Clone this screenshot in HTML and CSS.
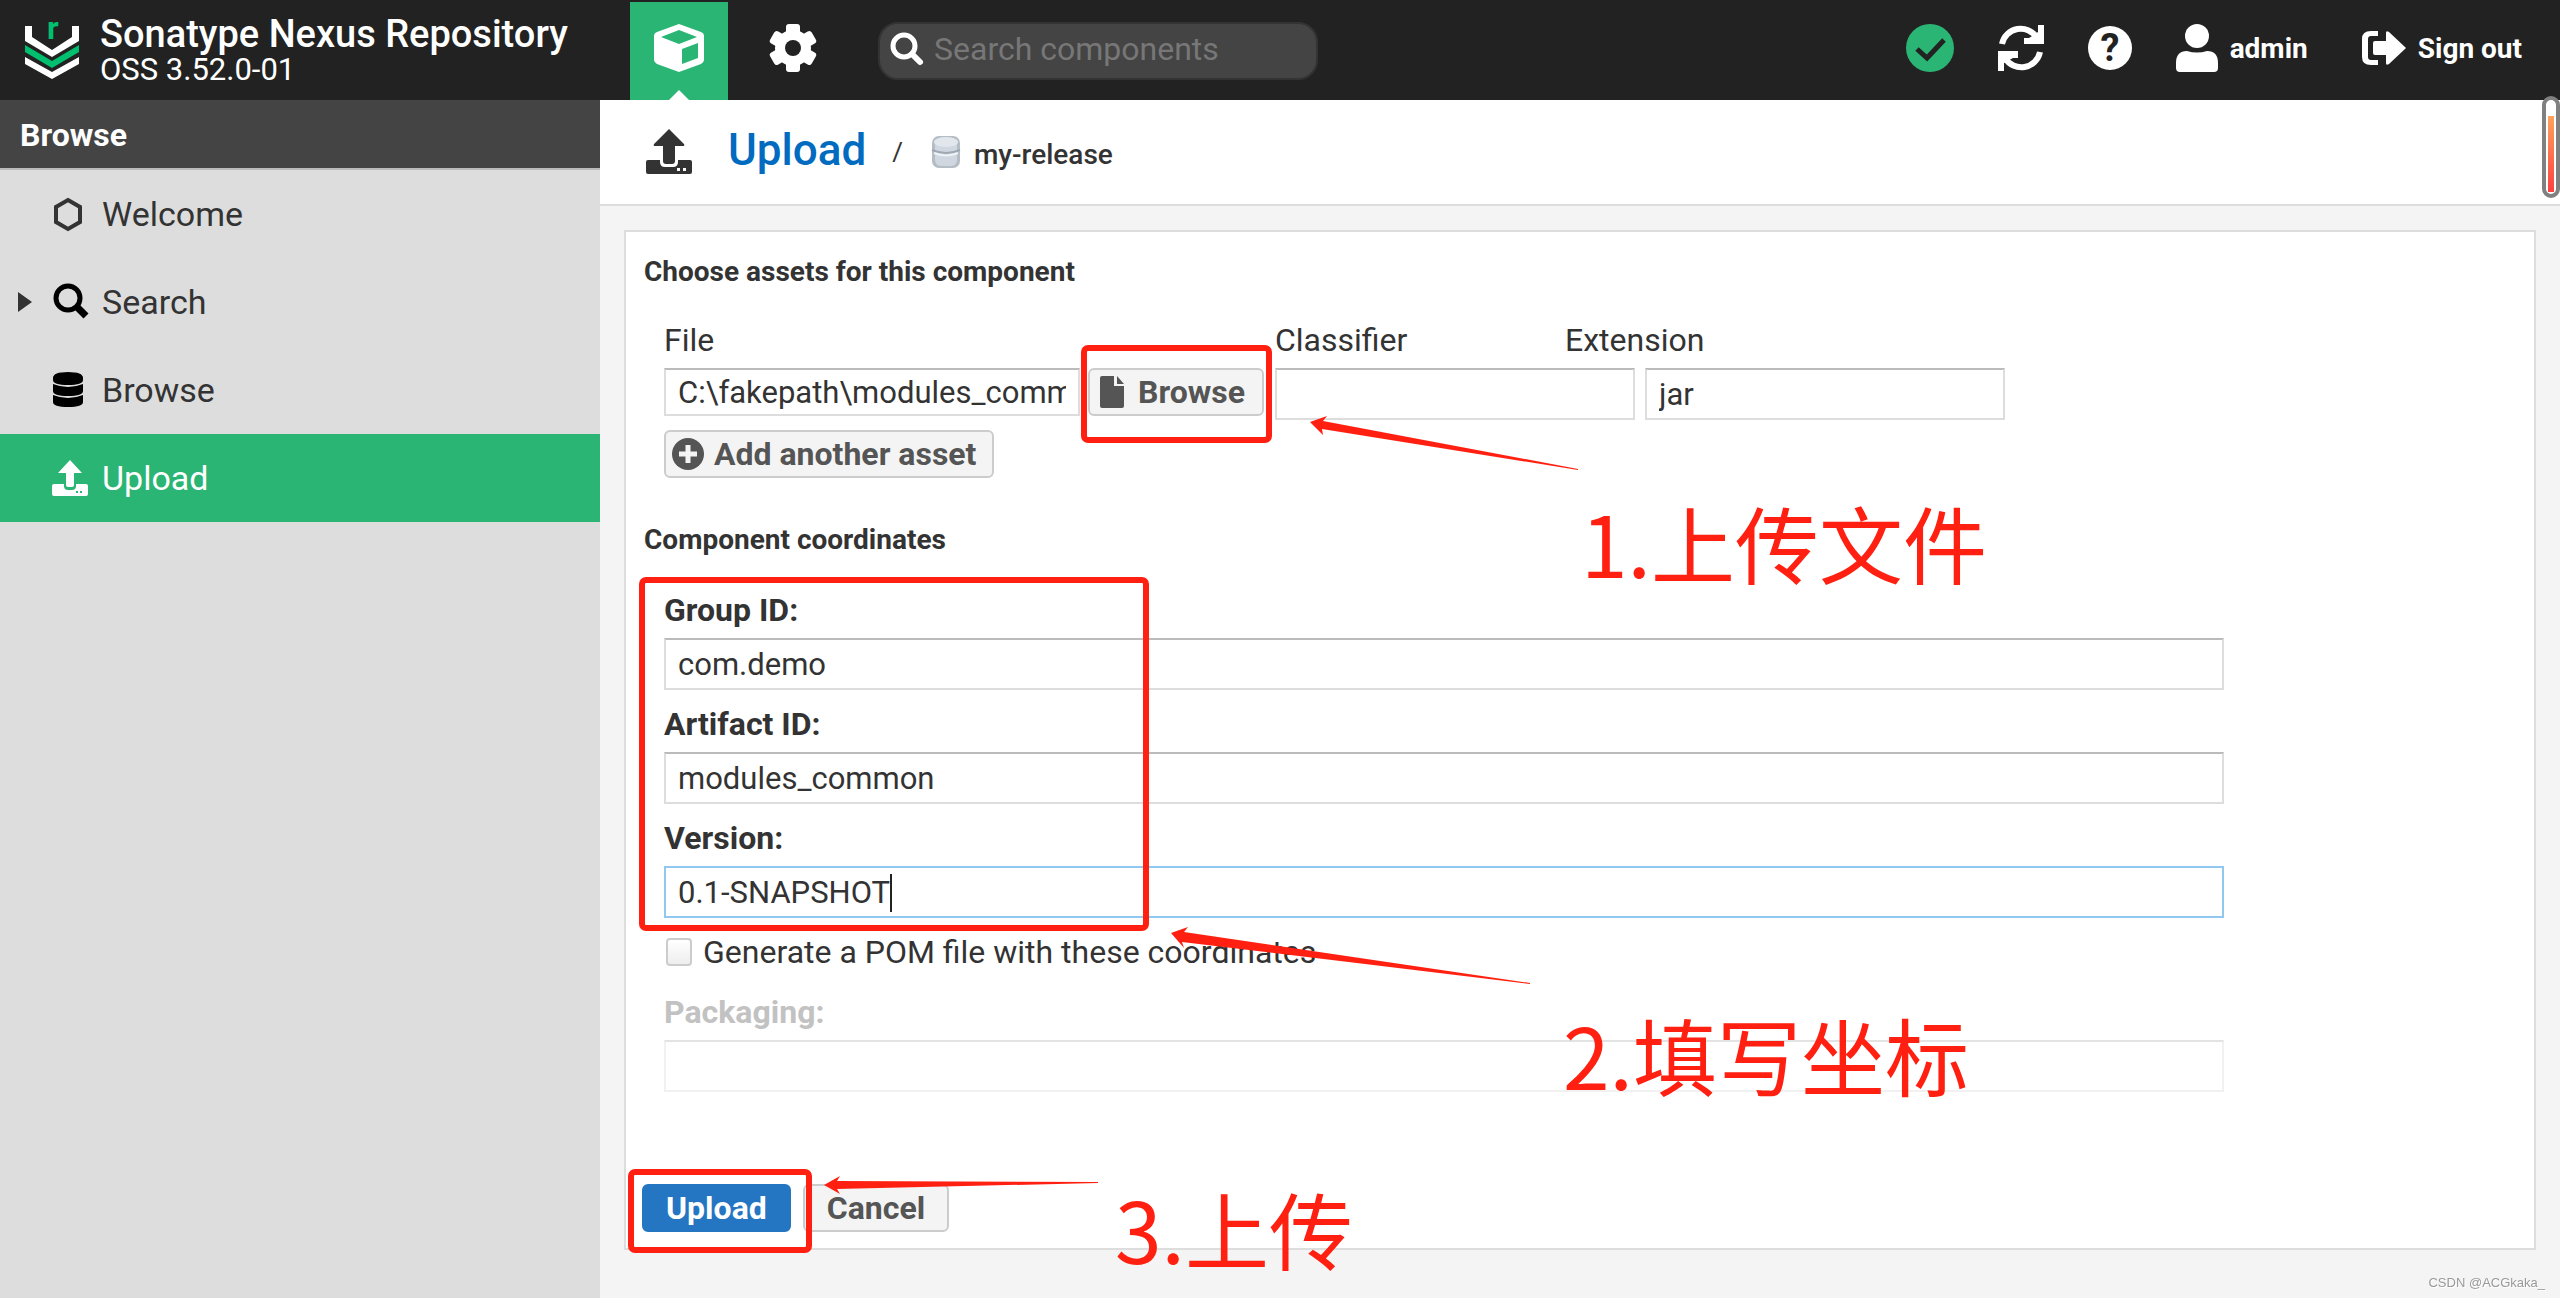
FILE: index.html
```
<!DOCTYPE html>
<html lang="en">
<head>
  <meta charset="UTF-8">
  <meta name="viewport" content="width=device-width, initial-scale=1.0">
  <title>Upload - Sonatype Nexus Repository</title>
  <link rel="stylesheet" href="styles.css">
</head>
<body>
  <header class="header">
    <div class="brand">
      <svg class="logo" viewBox="0 0 54 58">
        <path d="M0 5h7v11l20 13 20-13V5h7v15L27 36 0 20z" fill="#fff"/>
        <path d="M0 24l27 16 27-16v7L27 47 0 31z" fill="#00bf6f"/>
        <path d="M0 36l27 15 27-15v7L27 58 0 43z" fill="#fff"/>
        <text x="22" y="18" class="logo-r">r</text>
      </svg>
      <div>
        <div class="brand-name">Sonatype Nexus Repository</div>
        <div class="brand-version">OSS 3.52.0-01</div>
      </div>
    </div>
    <button class="mode-btn active" aria-label="Browse server contents">
      <svg width="50" height="48" viewBox="0 0 50 48">
        <path d="M25 0l22 8q3 1 3 4v24q0 2-3 4L25 48 3 40q-3-2-3-4V12q0-3 3-4z" fill="#fff"/>
        <path d="M25 6l18 7-18 7-18-7zM28 25l16-6v15l-16 6z" fill="#2ab574"/>
      </svg>
    </button>
    <button class="mode-btn" aria-label="Administration">
      <svg width="48" height="48" viewBox="0 0 48 48" fill="#fff">
        <mask id="gear"><rect width="48" height="48" fill="#fff"/><circle cx="24" cy="24" r="8" fill="#000"/></mask>
        <g mask="url(#gear)">
          <circle cx="24" cy="24" r="18"/>
          <rect x="17" y="0" width="14" height="48" rx="3"/>
          <rect x="17" y="0" width="14" height="48" rx="3" transform="rotate(60 24 24)"/>
          <rect x="17" y="0" width="14" height="48" rx="3" transform="rotate(120 24 24)"/>
        </g>
      </svg>
    </button>
    <div class="search">
      <svg width="34" height="34" viewBox="0 0 34 34" fill="none" stroke="#fff">
        <circle cx="14" cy="14" r="11" stroke-width="5"/>
        <path d="M22 22l8 8" stroke-width="6" stroke-linecap="round"/>
      </svg>
      <input type="text" placeholder="Search components" aria-label="Search components">
    </div>
    <div class="header-right">
      <button class="icon-btn" aria-label="System status">
        <svg width="48" height="48" viewBox="0 0 48 48">
          <circle cx="24" cy="24" r="24" fill="#2ab574"/>
          <path d="M11 25l10 9 17-18" fill="none" stroke="#222" stroke-width="5"/>
        </svg>
      </button>
      <button class="icon-btn" aria-label="Refresh">
        <svg width="46" height="46" viewBox="0 0 46 46" fill="none" stroke="#fff" stroke-width="6">
          <path d="M4 19a19 19 0 0 1 35-6M42 27a19 19 0 0 1-35 6"/>
          <path d="M46 0v19H26v-6h5l9-6V0zM0 46V26h20v7h-5l-9 5v8z" fill="#fff" stroke="none"/>
        </svg>
      </button>
      <button class="icon-btn" aria-label="Help">
        <svg width="44" height="44" viewBox="0 0 44 44">
          <circle cx="22" cy="22" r="22" fill="#fff"/>
          <text x="22" y="35" class="help-mark">?</text>
        </svg>
      </button>
      <button class="icon-btn user-btn">
        <svg width="42" height="48" viewBox="0 0 42 48" fill="#fff">
          <circle cx="21" cy="12" r="12"/>
          <path d="M11 27q10 3 20 0 11 0 11 12v5q0 4-4 4H4q-4 0-4-4v-5q0-12 11-12z"/>
        </svg>
        admin
      </button>
      <button class="icon-btn signout-btn">
        <svg width="44" height="34" viewBox="0 0 44 34" fill="#fff">
          <path d="M16 0v5H9q-3 0-3 3v18q0 3 3 3h7v5H9q-9 0-9-8V8q0-8 9-8z"/>
          <path d="M11 12q0-2 2-2h11V2q0-3 3-1l17 16-17 16q-3 2-3-1v-8H13q-2 0-2-2z"/>
        </svg>
        Sign out
      </button>
    </div>
  </header>

  <div class="page">
    <nav class="sidebar">
      <h2 class="sidebar-title">Browse</h2>
      <a class="menu-item" href="#welcome">
        <svg class="menu-icon" viewBox="0 0 36 36">
          <path d="M16 4l12 7v15l-12 7-12-7V11z" fill="none" stroke="#333" stroke-width="4"/>
        </svg>
        Welcome
      </a>
      <a class="menu-item expandable" href="#search">
        <svg class="menu-icon" viewBox="0 0 36 36" fill="none" stroke="#000">
          <circle cx="16" cy="14" r="12" stroke-width="5"/>
          <path d="M25 23l9 9" stroke-width="7"/>
        </svg>
        Search
      </a>
      <a class="menu-item" href="#browse">
        <svg class="menu-icon" viewBox="0 0 36 36">
          <path d="M1 6q0-6 15-6t15 6v2q0 5-15 5T1 8zM1 12q15 6 30 0v7q0 5-15 5T1 19zM1 23q15 6 30 0v7q0 5-15 5T1 30z"/>
        </svg>
        Browse
      </a>
      <a class="menu-item selected" href="#upload">
        <svg class="menu-icon" viewBox="0 0 36 36" fill="#fff">
          <path d="M18 0l12 13h-8v12q0 2-2 2h-4q-2 0-2-2V13H6z"/>
          <path d="M2 24h10v2q0 4 4 4h4q4 0 4-4v-2h10q2 0 2 2v8q0 2-2 2H2q-2 0-2-2v-8q0-2 2-2zm22 7v2h2v-2zm4 0v2h2v-2z" fill-rule="evenodd"/>
        </svg>
        Upload
      </a>
    </nav>

    <main class="main">
      <div class="toolbar">
        <svg width="46" height="46" viewBox="0 0 46 46" fill="#333">
          <path d="M23 0l15 15q1 2-1 2h-8v15q0 3-3 3h-6q-3 0-3-3V17H9q-2 0-1-2z"/>
          <path d="M2 31h12v2q0 5 5 5h8q5 0 5-5v-2h12q2 0 2 2v10q0 2-2 2H2q-2 0-2-2V33q0-2 2-2zm29 8v3h3v-3zm6 0v3h3v-3z" fill-rule="evenodd"/>
        </svg>
        <a class="crumb-main" href="#upload">Upload</a>
        <span class="crumb-sep">/</span>
        <svg width="30" height="34" viewBox="0 0 30 34">
          <rect x="1" y="1" width="28" height="32" rx="7" fill="#b4bcc4"/>
          <rect x="4" y="3" width="22" height="28" rx="6" fill="#d0d7e1"/>
          <ellipse cx="15" cy="7" rx="12" ry="5" fill="#e2e7ee"/>
          <path d="M1 15q14 6 28 0" fill="none" stroke="#a0a9b2" stroke-width="2"/>
          <path d="M3 18q12 5 24 0" fill="none" stroke="#eef1f5" stroke-width="2"/>
        </svg>
        <span class="crumb-repo">my-release</span>
      </div>

      <form class="panel">
        <h3>Choose assets for this component</h3>
        <div class="fields">
          <div class="asset-labels">
            <label for="file">File</label>
            <label for="classifier">Classifier</label>
            <label for="extension">Extension</label>
          </div>
          <div class="asset-row">
            <div class="file-field">
              <input type="text" id="file" value="C:\fakepath\modules_common-0.1.jar" readonly>
              <button type="button" class="btn browse-btn">
                <svg width="24" height="32" viewBox="0 0 24 32" fill="#555">
                  <path d="M0 2q0-2 2-2h12v10h10v20q0 2-2 2H2q-2 0-2-2zM17 0l7 8h-7z"/>
                </svg>
                Browse
              </button>
            </div>
            <input type="text" id="classifier">
            <input type="text" id="extension" value="jar">
          </div>
          <button type="button" class="btn add-btn">
            <svg width="32" height="32" viewBox="0 0 32 32">
              <circle cx="16" cy="16" r="16" fill="#555"/>
              <path d="M16 7v18M7 16h18" stroke="#f4f4f4" stroke-width="5"/>
            </svg>
            Add another asset
          </button>
        </div>

        <h3 class="coords-title">Component coordinates</h3>
        <div class="fields">
          <div class="field">
            <label for="group">Group ID:</label>
            <input type="text" id="group" value="com.demo">
          </div>
          <div class="field">
            <label for="artifact">Artifact ID:</label>
            <input type="text" id="artifact" value="modules_common">
          </div>
          <div class="field focused">
            <label for="version">Version:</label>
            <input type="text" id="version" value="0.1-SNAPSHOT">
            <span class="caret"></span>
          </div>
          <div class="check">
            <input type="checkbox" id="pom">
            <label for="pom">Generate a POM file with these coordinates</label>
          </div>
          <div class="field disabled">
            <label for="packaging">Packaging:</label>
            <input type="text" id="packaging" disabled>
          </div>
        </div>

        <div class="actions">
          <button type="button" class="btn primary">Upload</button>
          <button type="button" class="btn">Cancel</button>
        </div>

        <!-- tutorial marks drawn over the form -->
        <svg class="marks" width="1400" height="1066" viewBox="0 0 1400 1066">
          <g fill="none" stroke="#ff2011" stroke-width="6">
            <rect x="458" y="116" width="185" height="92" rx="4"/>
            <rect x="16" y="348" width="504" height="348" rx="4"/>
            <rect x="5" y="940" width="178" height="78" rx="4"/>
          </g>
          <g fill="#ff2011">
            <path d="M684 190l17-6-4 5 255 48v1L696 197l1 6z"/>
            <path d="M545 701l17-6-4 5 346 51v1L556 710l2 6z"/>
            <path d="M198 953l16-9-3 5 261 1v1l-261 6 3 5z"/>
          </g>
        </svg>
        <span class="note note-file" lang="zh">1.上传文件</span>
        <span class="note note-coords" lang="zh">2.填写坐标</span>
        <span class="note note-upload" lang="zh">3.上传</span>
      </form>
      <div class="scroll-pill"></div>
    </main>
  </div>
  <div class="watermark">CSDN @ACGkaka_</div>
</body>
</html>
```
FILE: styles.css
```
* {
  box-sizing: border-box;
}
body {
  margin: 0;
  min-height: 100vh;
  display: flex;
  flex-direction: column;
  background-color: #f4f4f4;
  color: #333;
  font-family: Roboto, "Noto Sans CJK SC", sans-serif;
  font-size: 32px;
}
button, input {
  font-family: inherit;
  font-size: inherit;
  color: inherit;
}
svg {
  display: block;
  flex-shrink: 0;
  overflow: visible;
}
a {
  text-decoration: none;
}

/* header */
.header {
  display: flex;
  height: 100px;
  background-color: #222;
  color: #fff;
}
.brand {
  display: flex;
  align-items: center;
  gap: 21px;
  width: 630px;
  padding-left: 25px;
}
.logo {
  width: 54px;
  height: 58px;
}
.logo-r {
  font-size: 32px;
  font-weight: bold;
  fill: #00bf6f;
}
.brand-name {
  font-size: 38px;
  font-weight: 500;
  line-height: 40px;
}
.brand-version {
  font-size: 31px;
  line-height: 32px;
}
.mode-btn {
  position: relative;
  display: flex;
  justify-content: center;
  align-items: center;
  width: 98px;
  margin-top: 2px;
  padding: 0 0 6px;
  border: none;
  background: none;
}
.mode-btn.active {
  background-color: #2ab574;
}
.mode-btn.active + .mode-btn {
  width: 130px;
}
.mode-btn.active::after {
  content: "";
  position: absolute;
  bottom: 0;
  left: 39px;
  border: 10px solid transparent;
  border-top: none;
  border-bottom-color: #fff;
}
.search {
  display: flex;
  align-items: center;
  gap: 8px;
  width: 440px;
  height: 58px;
  margin: 22px 0 0 20px;
  padding: 0 10px 4px;
  border: 2px solid #333;
  border-radius: 20px;
  background-color: #444;
}
.search input {
  width: 100%;
  border: none;
  outline: none;
  background: none;
}
.search input::placeholder {
  color: #777;
}
.header-right {
  display: flex;
  align-items: center;
  gap: 44px;
  margin-left: auto;
  padding: 0 38px 4px 0;
}
.icon-btn {
  display: flex;
  align-items: center;
  gap: 12px;
  padding: 0;
  border: none;
  background: none;
  font-size: 28px;
  font-weight: bold;
}
.signout-btn {
  margin-left: 10px;
}
.help-mark {
  font-size: 38px;
  font-weight: bold;
  text-anchor: middle;
  fill: #222;
}

/* sidebar */
.page {
  display: flex;
  flex: 1;
}
.sidebar {
  width: 600px;
  background-color: #ddd;
}
.sidebar-title {
  height: 70px;
  margin: 0;
  padding-left: 20px;
  border-bottom: 2px solid #bbb;
  background-color: #444;
  color: #fff;
  font-size: 32px;
  line-height: 70px;
}
.menu-item {
  position: relative;
  display: flex;
  align-items: center;
  gap: 14px;
  height: 88px;
  padding-left: 52px;
  color: #333;
  font-size: 34px;
}
.menu-item.selected {
  background-color: #2ab574;
  color: #fff;
}
.menu-icon {
  width: 36px;
  height: 36px;
}
.expandable::before {
  content: "";
  position: absolute;
  left: 18px;
  border: 10px solid transparent;
  border-left: 14px solid #333;
  border-right: none;
}

/* content */
.main {
  position: relative;
  flex: 1;
}
.toolbar {
  display: flex;
  align-items: center;
  height: 106px;
  padding-left: 46px;
  border-bottom: 2px solid #ddd;
  background-color: #fff;
}
.crumb-main {
  margin: 0 26px 4px 36px;
  color: #006bbf;
  font-size: 44px;
  font-weight: 500;
}
.crumb-sep {
  margin-right: 28px;
  font-size: 26px;
}
.crumb-repo {
  margin: 4px 0 0 13px;
  font-size: 28px;
  font-weight: 500;
}
.panel {
  position: relative;
  margin: 24px 24px 48px;
  padding: 24px 18px 16px;
  border: 2px solid #ddd;
  background-color: #fff;
}
h3 {
  margin: 0;
  font-size: 28px;
  line-height: 32px;
}
.coords-title {
  margin: 46px 0 32px;
}
.fields {
  max-width: 1580px;
  padding-left: 20px;
}
.asset-labels {
  display: grid;
  grid-template-columns: 611px 290px 1fr;
  margin: 30px 0 6px;
  line-height: 44px;
}
.asset-row {
  display: flex;
  gap: 10px;
}
input[type="text"] {
  outline: none;
}
.fields input[type="text"] {
  height: 52px;
  padding: 0 12px;
  border: 2px solid #ddd;
  border-top-color: #bbb;
  background-color: #fff;
  font-size: 31px;
}
.asset-row > input {
  width: 360px;
}
.file-field {
  display: flex;
  gap: 8px;
  width: 601px;
}
.file-field input[type="text"] {
  width: 416px;
  height: 48px;
}
.btn {
  display: flex;
  align-items: center;
  height: 48px;
  padding: 0 22px;
  border: 2px solid #ccc;
  border-radius: 6px;
  background-color: #f4f4f4;
  color: #555;
  font-weight: bold;
}
.browse-btn {
  gap: 14px;
  width: 176px;
  padding: 0 10px;
}
.add-btn {
  gap: 10px;
  margin-top: 10px;
  padding: 0 16px 0 6px;
}
.field {
  position: relative;
  margin-top: 12px;
}
.field label {
  display: block;
  margin-bottom: 6px;
  font-weight: bold;
  line-height: 44px;
}
.field input[type="text"] {
  width: 100%;
  display: block;
}
.field.focused input[type="text"] {
  border-color: #91c8f0;
}
.caret {
  position: absolute;
  left: 226px;
  bottom: 6px;
  width: 2px;
  height: 38px;
  background-color: #222;
}
.check {
  display: flex;
  align-items: center;
  gap: 11px;
  margin-top: 12px;
  line-height: 44px;
}
.check input {
  appearance: none;
  width: 26px;
  height: 28px;
  margin: 0 0 0 2px;
  border: 2px solid #ccc;
  border-radius: 4px;
  background: linear-gradient(#fff, #eee);
}
.field.disabled {
  margin-top: 16px;
}
.disabled label {
  color: #c2c2c2;
}
.disabled input[type="text"] {
  opacity: 0.4;
}
.actions {
  display: flex;
  gap: 12px;
  margin: 92px 0 0 -2px;
}
.primary {
  border-color: #2476c3;
  background-color: #2476c3;
  color: #fff;
}

/* marks over the form */
.marks {
  position: absolute;
  top: 0;
  left: 0;
  pointer-events: none;
}
.note {
  position: absolute;
  color: #ff2011;
  font-family: "Noto Sans CJK SC", sans-serif;
  font-size: 84px;
  line-height: 100px;
}
.note-file {
  top: 260px;
  left: 955px;
}
.note-coords {
  top: 772px;
  left: 937px;
}
.note-upload {
  top: 946px;
  left: 489px;
}
.scroll-pill {
  position: absolute;
  top: -4px;
  right: 0;
  width: 18px;
  height: 102px;
  border: 4px solid #808080;
  border-radius: 9px;
  background: #fff linear-gradient(#ffa35c, #ff4040) center bottom 2px / 6px 76px no-repeat;
}
.watermark {
  position: fixed;
  right: 15px;
  bottom: 8px;
  color: #999;
  font-family: "Liberation Sans", sans-serif;
  font-size: 13px;
  text-shadow: 1px 1px #fff;
}
```
